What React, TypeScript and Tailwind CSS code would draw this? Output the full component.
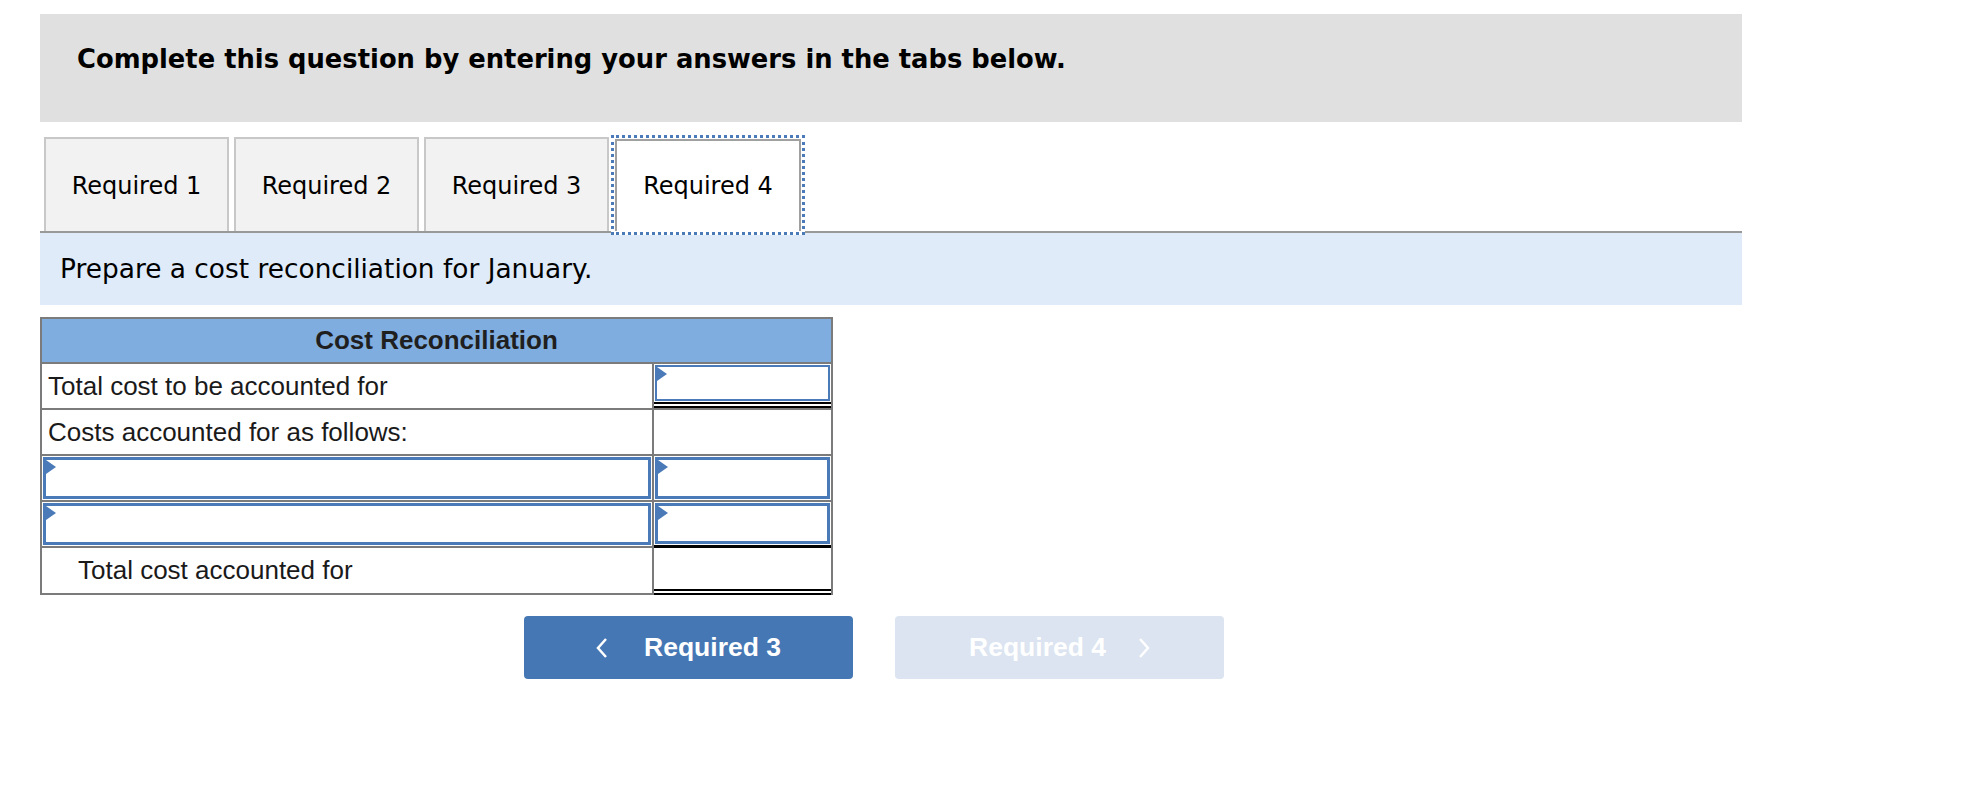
import React from "react";

const verdana = { fontFamily: '"DejaVu Sans", Verdana, sans-serif' };

function Marker() {
  return (
    <svg className="absolute left-0 top-0" width="10" height="14" viewBox="0 0 10 14">
      <polygon points="0,0 10,7 0,14" fill="#4a7ab8" />
    </svg>
  );
}

function InputBox({ className = "" }: { className?: string }) {
  return (
    <div className={"relative border-2 border-[#4a7ab8] bg-white " + className}>
      <Marker />
    </div>
  );
}

function Tab({ label, active }: { label: string; active?: boolean }) {
  if (active) {
    return (
      <div className="h-[100px] w-[194px] -mb-[4px] border-[3px] border-dotted border-[#4a7ab8] p-[1px] z-10 bg-white">
        <div className="h-full w-full border-2 border-b-0 border-[#a0a0a0] bg-white flex items-center justify-center text-[24px] text-black">
          {label}
        </div>
      </div>
    );
  }
  return (
    <div className="h-[94px] w-[185px] border-2 border-b-0 border-[#c8c8c8] bg-[#f2f2f2] flex items-center justify-center pt-[2px] text-[24px] text-black">
      {label}
    </div>
  );
}

export default function App() {
  return (
    <div className="min-h-[798px] w-[1976px] bg-white pl-[40px] pt-[14px]" style={verdana}>
      <div className="w-[1702px]">
        <div className="h-[108px] bg-[#e0e0e0] pl-[37px] pt-[33px]">
          <h1 className="text-[25.8px] font-bold text-black leading-none">
            Complete this question by entering your answers in the tabs below.
          </h1>
        </div>

        <div className="mt-[15px] flex items-end gap-[5px] pl-[4px] border-b-2 border-[#999999]">
          <Tab label="Required 1" />
          <Tab label="Required 2" />
          <Tab label="Required 3" />
          <div className="-ml-[3px] -mt-[6px]">
            <Tab label="Required 4" active />
          </div>
        </div>

        <div className="h-[72px] bg-[#dfebf8] pl-[20px] flex items-center text-[26.4px] text-black">
          Prepare a cost reconciliation for January.
        </div>
      </div>

      <div
        className="mt-[12px] w-[793px] border-2 border-[#7b7b7b] text-[26px] text-[#1a1a1a]"
        style={{ fontFamily: '"Liberation Sans", Arial, sans-serif' }}
      >
        <div className="h-[45px] bg-[#80ade0] border-b-2 border-[#7b7b7b] flex items-center justify-center font-bold text-[#1f1f1f]">
          Cost Reconciliation
        </div>

        <div className="flex h-[46px] border-b-2 border-[#7b7b7b]">
          <div className="flex-1 border-r-2 border-[#7b7b7b] flex items-center pl-[6px]">Total cost to be accounted for</div>
          <div className="w-[177px] flex flex-col">
            <InputBox className="flex-1 mx-[1px] mt-[1px]" />
            <div className="h-[6px] border-y-[2px] border-black mt-[1px]" />
          </div>
        </div>

        <div className="flex h-[46px] border-b-2 border-[#7b7b7b]">
          <div className="flex-1 border-r-2 border-[#7b7b7b] flex items-center pl-[6px]">Costs accounted for as follows:</div>
          <div className="w-[177px]" />
        </div>

        <div className="flex h-[46px] border-b-2 border-[#7b7b7b]">
          <div className="flex-1 border-r-2 border-[#7b7b7b] flex">
            <InputBox className="flex-1 my-[1px] ml-[1px] mr-[1px] border-[3px]" />
          </div>
          <div className="w-[177px] flex">
            <InputBox className="flex-1 m-[1px] border-[3px]" />
          </div>
        </div>

        <div className="flex h-[46px] border-b-2 border-[#7b7b7b]">
          <div className="flex-1 border-r-2 border-[#7b7b7b] flex">
            <InputBox className="flex-1 my-[1px] ml-[1px] mr-[1px] border-[3px]" />
          </div>
          <div className="w-[177px] flex flex-col">
            <InputBox className="flex-1 mx-[1px] mt-[1px] border-[3px]" />
            <div className="h-[3px] bg-black mt-[1px] -mb-[2px] relative z-10" />
          </div>
        </div>

        <div className="flex h-[45px]">
          <div className="flex-1 border-r-2 border-[#7b7b7b] flex items-center pl-[36px]">Total cost accounted for</div>
          <div className="w-[177px] flex flex-col justify-end">
            <div className="h-[6px] border-y-[2px] border-black -mb-[2px] relative z-10" />
          </div>
        </div>
      </div>

      <div
        className="mt-[21px] ml-[484px] flex gap-[42px]"
        style={{ fontFamily: '"Liberation Sans", Arial, sans-serif' }}
      >
        <button className="h-[63px] w-[329px] rounded-[4px] bg-[#4577b5] text-white font-bold text-[26.5px] flex items-center justify-center gap-[36px]">
          <svg width="12" height="22" viewBox="0 0 12 22" fill="none">
            <polyline points="10,2 2,11 10,20" stroke="white" strokeWidth="2.5" />
          </svg>
          <span>Required 3</span>
        </button>
        <button className="h-[63px] w-[329px] rounded-[4px] bg-[#dbe4f0] text-white font-bold text-[26.5px] flex items-center justify-center gap-[32px]">
          <span>Required 4</span>
          <svg width="12" height="22" viewBox="0 0 12 22" fill="none">
            <polyline points="2,2 10,11 2,20" stroke="white" strokeWidth="2.5" />
          </svg>
        </button>
      </div>
    </div>
  );
}
